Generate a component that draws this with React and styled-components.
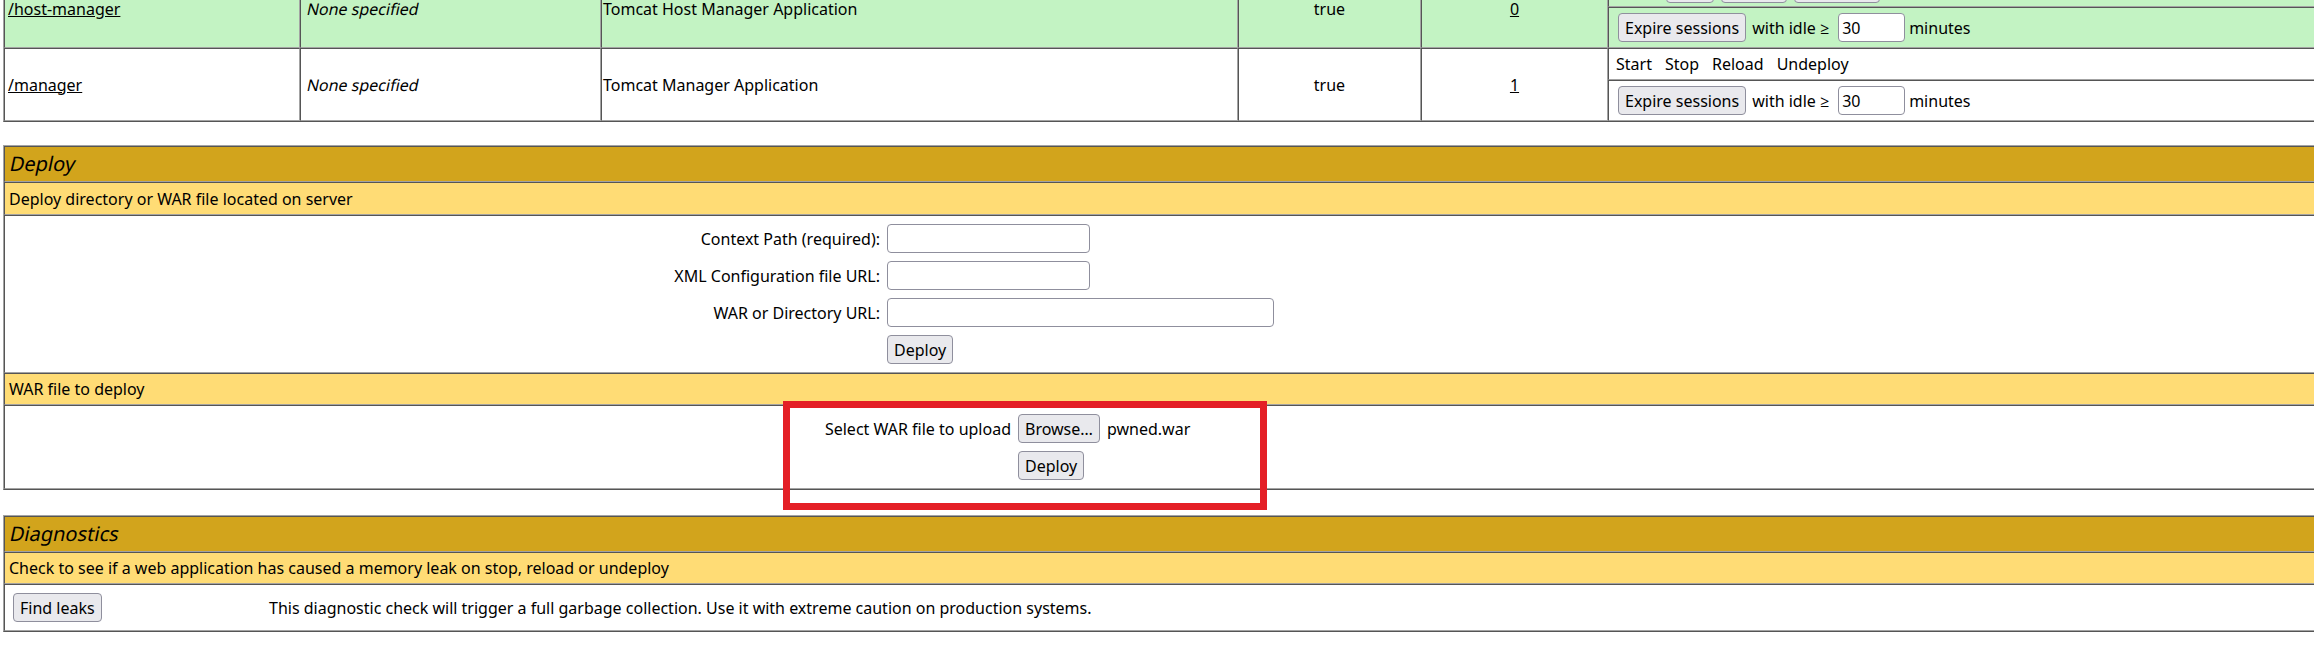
import React from 'react';
import styled, { createGlobalStyle } from 'styled-components';

const LIGHT = '#a3a3a3';
const DARK = '#555555';
const GREEN = '#C3F3C3';
const GOLD = '#D2A41C';
const SAND = '#FFDC75';

const Global = createGlobalStyle`
  html, body { margin: 0; padding: 0; overflow: hidden; background: #ffffff; }
  body {
    font-family: "Noto Sans", "Open Sans", sans-serif;
    font-size: 16px;
    line-height: 22px;
    color: #000000;
  }
  *, *::before, *::after { box-sizing: border-box; }
`;

const Page = styled.div`
  width: 2520px;
  margin-top: -31px;
  padding-left: 3px;
  display: flex;
  flex-direction: column;
`;

/* outset frame of a bordered table */
const Frame = styled.div`
  border: 1px solid;
  border-color: ${LIGHT} ${DARK} ${DARK} ${LIGHT};
  margin-top: ${(p) => p.$top || 0}px;
`;

const AppsGrid = styled(Frame)`
  display: grid;
  grid-template-columns: 296px 301px 637px 183px 187px 1fr;
  grid-template-rows: 37px 41px 32px 41px;
`;

/* inset cell of a bordered table */
const Cell = styled.div`
  border: 1px solid;
  border-color: ${DARK} ${LIGHT} ${LIGHT} ${DARK};
  background: ${(p) => p.$bg || '#ffffff'};
  display: flex;
  align-items: center;
  justify-content: ${(p) => (p.$center ? 'center' : 'flex-start')};
  padding: 0 3px 0 ${(p) => (p.$padLeft ?? 3)}px;
  grid-row: ${(p) => (p.$span ? `span ${p.$span}` : 'auto')};
  grid-column: ${(p) => (p.$col ? p.$col : 'auto')};
  white-space: nowrap;
`;

/* synthetic oblique of the regular face, as the reference renders it */
const Oblique = styled.span`
  display: inline-block;
  font-style: normal;
  transform: skewX(-12deg);
  transform-origin: 0 75%;
  padding-left: ${(p) => p.$pad || 0}px;
`;

const Link = styled.a`
  color: #000000;
  text-decoration: underline;
`;

const CommandBar = styled.div`
  display: flex;
  align-items: center;
  gap: ${(p) => p.$gap}px;
`;

const CommandText = styled.span`
  padding: 0 ${(p) => p.$padRight || 4}px 0 4px;
`;

const Button = styled.button`
  height: 29px;
  margin: 0 0 0 ${(p) => p.$ml || 0}px;
  padding: 0 6px;
  font-family: inherit;
  font-size: 16px;
  line-height: 22px;
  color: #000000;
  background: #e9e9ed;
  border: 1px solid #8f8f9d;
  border-radius: 4px;
  cursor: pointer;
`;

const TextInput = styled.input`
  width: ${(p) => p.$w}px;
  height: 29px;
  margin: 0;
  padding: 0 3px;
  font-family: inherit;
  font-size: 16px;
  color: #000000;
  background: #ffffff;
  border: 1px solid #8f8f9d;
  border-radius: 4px;
`;

const Inline = styled.span`
  margin: 0 ${(p) => p.$mr || 0}px 0 ${(p) => p.$ml || 0}px;
`;

const Section = styled(Frame)`
  display: flex;
  flex-direction: column;
`;

const TitleCell = styled(Cell)`
  height: 36px;
  padding: 0 4px;
  background: ${GOLD};
  font-size: 20px;
`;

const HeaderCell = styled(Cell)`
  height: ${(p) => p.$h}px;
  padding: 0 4px;
  background: ${SAND};
`;

const BodyCell = styled(Cell)`
  position: relative;
  display: block;
  padding: 4px;
`;

const FormGrid = styled.div`
  display: grid;
  grid-template-columns: ${(p) => p.$label}px auto;
  grid-auto-rows: 37px;
  column-gap: 7px;
  align-items: center;
  justify-content: start;
`;

const FieldLabel = styled.span`
  text-align: right;
  white-space: nowrap;
`;

const FileField = styled.div`
  display: flex;
  align-items: center;
  gap: 7px;
`;

const LeakRow = styled.div`
  display: grid;
  grid-template-columns: 260px auto;
  height: 37px;
  align-items: center;
`;

const Callout = styled.div`
  position: absolute;
  left: 778px;
  top: -5px;
  width: 484px;
  height: 109px;
  border: 7px solid #e41f26;
  pointer-events: none;
`;

const apps = [
  { path: '/host-manager', name: 'Tomcat Host Manager Application', sessions: '0', bg: GREEN, live: true },
  { path: '/manager', name: 'Tomcat Manager Application', sessions: '1', bg: '#ffffff', live: false },
];

function Commands({ live }) {
  if (live) {
    return (
      <CommandBar $gap={7}>
        <CommandText $padRight={7}>Start</CommandText>
        <Button>Stop</Button>
        <Button>Reload</Button>
        <Button>Undeploy</Button>
      </CommandBar>
    );
  }
  return (
    <CommandBar $gap={5}>
      {['Start', 'Stop', 'Reload', 'Undeploy'].map((c) => (
        <CommandText key={c}>{c}</CommandText>
      ))}
    </CommandBar>
  );
}

function Expire() {
  return (
    <CommandBar $gap={0}>
      <Button $ml={6}>Expire sessions</Button>
      <Inline $ml={6} $mr={9}>with idle ≥</Inline>
      <TextInput $w={67} defaultValue="30" />
      <Inline $ml={4}>minutes</Inline>
    </CommandBar>
  );
}

export default function App() {
  return (
    <>
      <Global />
      <Page>
        <AppsGrid>
          {apps.map((app) => (
            <React.Fragment key={app.path}>
              <Cell $bg={app.bg} $span={2}>
                <Link href="#">{app.path}</Link>
              </Cell>
              <Cell $bg={app.bg} $span={2}>
                <Oblique $pad={2}>None specified</Oblique>
              </Cell>
              <Cell $bg={app.bg} $span={2} $padLeft={1}>
                {app.name}
              </Cell>
              <Cell $bg={app.bg} $span={2} $center>
                true
              </Cell>
              <Cell $bg={app.bg} $span={2} $center>
                <Link href="#">{app.sessions}</Link>
              </Cell>
              <Cell $bg={app.bg} $col={6}>
                <Commands live={app.live} />
              </Cell>
              <Cell $bg={app.bg} $col={6}>
                <Expire />
              </Cell>
            </React.Fragment>
          ))}
        </AppsGrid>

        <Section $top={23}>
          <TitleCell>
            <Oblique>Deploy</Oblique>
          </TitleCell>
          <HeaderCell $h={33}>Deploy directory or WAR file located on server</HeaderCell>
          <BodyCell>
            <FormGrid $label={871}>
              <FieldLabel>Context Path (required):</FieldLabel>
              <TextInput $w={203} />
              <FieldLabel>XML Configuration file URL:</FieldLabel>
              <TextInput $w={203} />
              <FieldLabel>WAR or Directory URL:</FieldLabel>
              <TextInput $w={387} />
              <FieldLabel />
              <div>
                <Button>Deploy</Button>
              </div>
            </FormGrid>
          </BodyCell>
          <HeaderCell $h={32}>WAR file to deploy</HeaderCell>
          <BodyCell>
            <FormGrid $label={1002}>
              <FieldLabel>Select WAR file to upload</FieldLabel>
              <FileField>
                <Button>Browse…</Button>
                <span>pwned.war</span>
              </FileField>
              <FieldLabel />
              <div>
                <Button>Deploy</Button>
              </div>
            </FormGrid>
            <Callout />
          </BodyCell>
        </Section>

        <Section $top={25}>
          <TitleCell>
            <Oblique>Diagnostics</Oblique>
          </TitleCell>
          <HeaderCell $h={32}>
            Check to see if a web application has caused a memory leak on stop, reload or undeploy
          </HeaderCell>
          <BodyCell>
            <LeakRow>
              <div>
                <Button $ml={4}>Find leaks</Button>
              </div>
              <span>
                This diagnostic check will trigger a full garbage collection. Use it with extreme caution on
                production systems.
              </span>
            </LeakRow>
          </BodyCell>
        </Section>
      </Page>
    </>
  );
}
